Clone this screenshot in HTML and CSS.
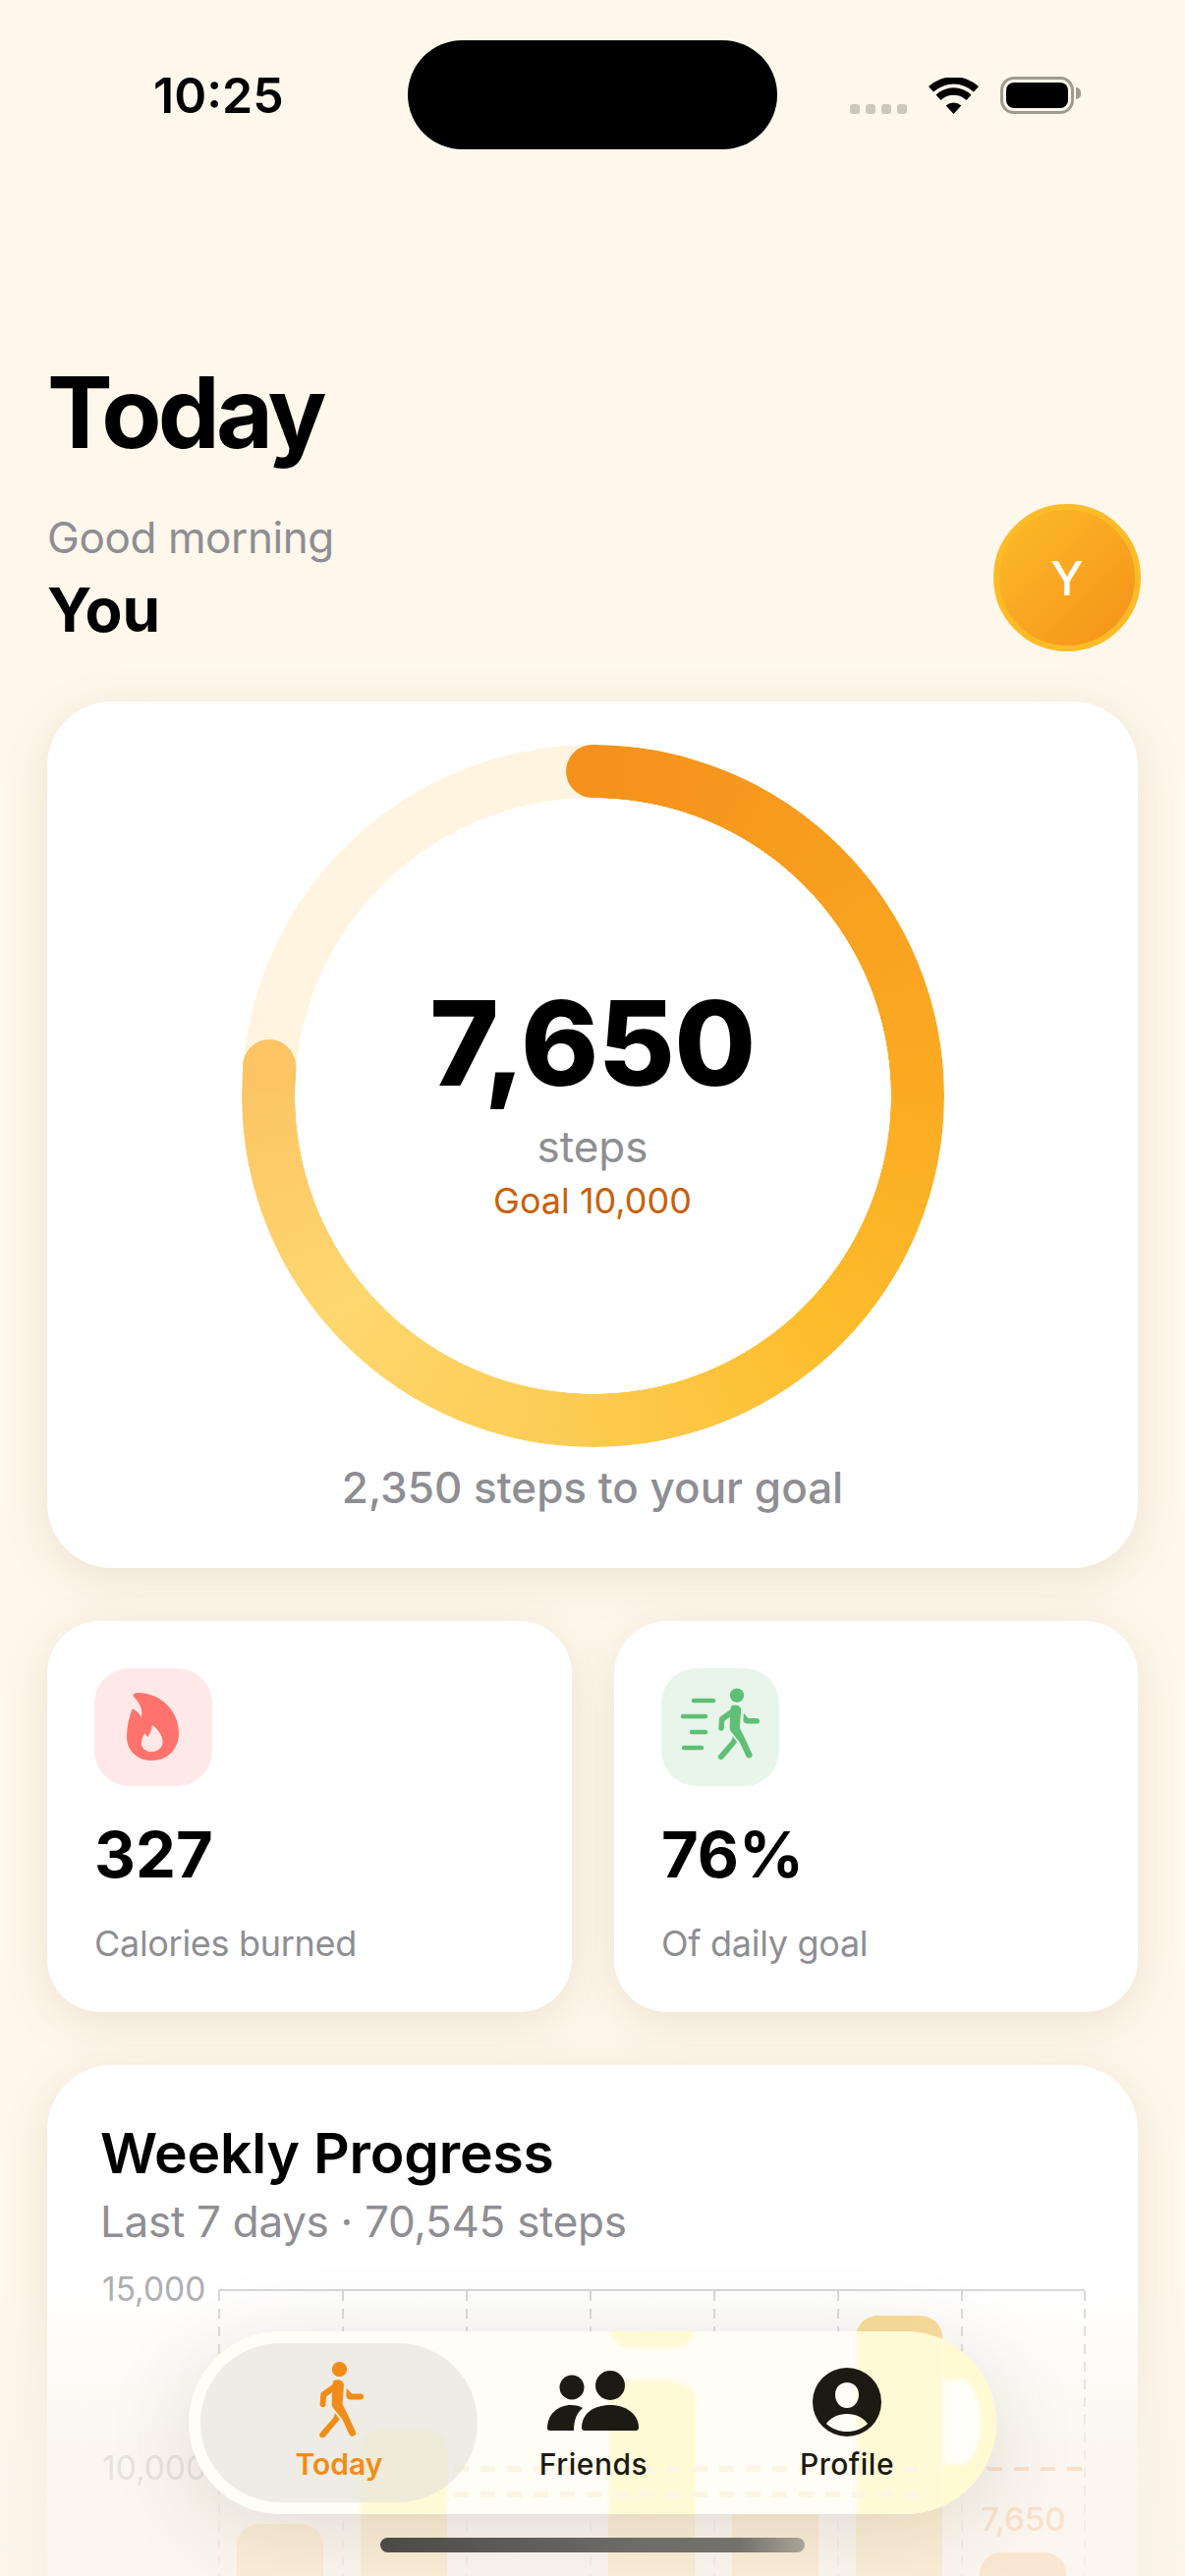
FILE: index.html
```html
<!DOCTYPE html>
<html lang="en">

<head>
    <meta charset="UTF-8">
    <meta name="viewport" content="width=device-width, initial-scale=1.0">
    <title>Today</title>
    <link rel="stylesheet" href="styles.css">
</head>

<body>
    <svg class="defs" width="0" height="0">
        <symbol id="walker" viewBox="0 0 49 78">
            <circle cx="24.5" cy="7.7" r="7.6" />
            <path d="M18 19.5C22 17 28 18 29 23L27.5 43L33 54L40.5 70.5A3.4 3.4 0 0 1 34.5 74L27.5 58.5L18.5 47.5C16.5 45 16.5 43 16.7 41L17 30Z" />
            <path d="M19 22L7 30.5C5.6 31.5 5.2 32.6 5.2 34L4.6 43A2.9 2.9 0 0 0 10.4 43.5L11 35.5L17 31Z" />
            <path d="M31.8 27L37 32.5L46 32.5A2.9 2.9 0 0 1 46 38.5L36 38.5C33.500 38.500 31.400 37 31.300 34.500Z" />
            <path d="M19.800 52L24.700 58.500L9.500 76.500C6.500 79 2.500 75.500 4.700 72.500L16.500 59C18.500 57 19.500 55 19.800 52Z" />
        </symbol>
    </svg>

    <div class="screen">
        <div class="status">
            <span class="time">10:25</span>
            <div class="island"></div>
            <div class="status-icons">
                <div class="signal"><i></i><i></i><i></i><i></i></div>
                <svg class="wifi" viewBox="0 0 51 37">
                    <path d="M25.500 37L17.700 28.500A11.500 11.500 0 0 1 33.300 28.500Z" />
                    <path d="M12.500 23L7.500 17.500A26 26 0 0 1 43.500 17.500L38.500 23A18.600 18.600 0 0 0 12.500 23Z" />
                    <path d="M5 14.500L0 9A38 38 0 0 1 51 9L46 14.500A30.500 30.500 0 0 0 5 14.500Z" />
                </svg>
                <div class="battery">
                    <div class="battery-level"></div>
                </div>
            </div>
        </div>

        <main class="content">
            <h1>Today</h1>
            <div class="greeting">
                <div>
                    <div class="greeting-sub">Good morning</div>
                    <div class="greeting-name">You</div>
                </div>
                <div class="avatar">Y</div>
            </div>

            <section class="card ring-card">
                <div class="ring">
                    <div class="ring-track"></div>
                    <div class="ring-fill"></div>
                    <div class="ring-cap ring-cap-start"></div>
                    <div class="ring-cap ring-cap-end"></div>
                    <div class="ring-value">7,650</div>
                    <div class="ring-unit">steps</div>
                    <div class="ring-goal">Goal 10,000</div>
                </div>
                <p class="ring-note">2,350 steps to your goal</p>
            </section>

            <div class="stats">
                <section class="card stat">
                    <div class="stat-icon stat-icon-red">
                        <svg viewBox="0 0 120 120" width="120" height="120">
                            <path fill-rule="evenodd" d="M40 29C38.500 26.500 41 25 44 25C68 25 86 44 86 66C86 83 74 94 58 94C43 94 33 83 33 70C33 60 35 51 38 43C38.500 41.500 40 41.500 41 42.500C44 44 46.500 47 47.500 50C50 42 46 35 40 29ZM59 58C58 63 56.500 67 54.500 70C53 68.500 52.500 67.500 51.500 66.500C49 69.500 48 73 48 76.500C48 81.500 52.500 85 58 85C64.500 85 69.500 81 69.500 75C69.500 68 64.500 62 59 58Z" />
                        </svg>
                    </div>
                    <div class="stat-value">327</div>
                    <div class="stat-label">Calories burned</div>
                </section>
                <section class="card stat">
                    <div class="stat-icon stat-icon-green">
                        <svg viewBox="0 0 120 120" width="120" height="120">
                            <g class="speed-lines">
                                <path d="M33 33H53" />
                                <path d="M22 49H45" />
                                <path d="M31 65H45" />
                                <path d="M23 81H41" />
                            </g>
                            <use href="#walker" x="54" y="20" width="46" height="74" />
                        </svg>
                    </div>
                    <div class="stat-value">76%</div>
                    <div class="stat-label">Of daily goal</div>
                </section>
            </div>

            <section class="card weekly">
                <h2>Weekly Progress</h2>
                <p class="weekly-sub">Last 7 days · 70,545 steps</p>
                <div class="chart">
                    <div class="axis">
                        <span>15,000</span>
                        <span>10,000</span>
                    </div>
                    <div class="plot">
                        <div class="goal-line"></div>
                        <div class="col"><div class="bar" style="height: 307px"></div></div>
                        <div class="col"><div class="bar" style="height: 403px"></div></div>
                        <div class="col"><div class="bar" style="height: 251px"></div></div>
                        <div class="col"><div class="bar" style="height: 453px"></div></div>
                        <div class="col"><div class="bar" style="height: 356px"></div></div>
                        <div class="col"><div class="bar" style="height: 519px"></div></div>
                        <div class="col col-last">
                            <span class="bar-label">7,650</span>
                            <div class="bar bar-today" style="height: 278px"></div>
                        </div>
                    </div>
                </div>
            </section>
        </main>

        <div class="fade"></div>

        <nav class="tabbar">
            <div class="ghost ghost-a"></div>
            <div class="ghost ghost-b"></div>
            <div class="ghost ghost-c"></div>
            <div class="ghost ghost-d"></div>
            <div class="ghost-dash ghost-dash-a"></div>
            <div class="ghost-dash ghost-dash-b"></div>
            <div class="ghost-end"></div>
            <div class="ghost-spot"></div>

            <a class="tab tab-active">
                <svg class="tab-icon" width="49" height="78"><use href="#walker" /></svg>
                <span>Today</span>
            </a>
            <a class="tab">
                <svg class="tab-icon tab-icon-friends" viewBox="0 0 94 64" width="94" height="64">
                    <circle cx="25" cy="18" r="12.500" />
                    <circle cx="64" cy="16" r="15" />
                    <path d="M0 60C0 45 11 36 24 36C29 36 33 37 36 39C30 44 27 51 27 62L3 62C1 62 0 61 0 60Z" />
                    <path d="M35 59C35 45 47 36 64 36C81 36 93 46 93 59C93 61 92 62 90 62L38 62C36 62 35 61 35 59Z" />
                </svg>
                <span>Friends</span>
            </a>
            <a class="tab">
                <svg class="tab-icon tab-icon-profile" viewBox="0 0 70 70" width="70" height="70">
                    <path fill-rule="evenodd" d="M35 0A35 35 0 1 1 35 70A35 35 0 1 1 35 0ZM35 15C28 15 23 20 23 27.500C23 35 28 41 35 41C42 41 47 35 47 27.500C47 20 42 15 35 15ZM35 47C26 47 18 51 14 57C20 62.500 27 65 35 65C43 65 50 62.500 56 57C52 51 44 47 35 47Z" />
                </svg>
                <span>Profile</span>
            </a>
        </nav>

        <div class="home-indicator"></div>
    </div>
</body>

</html>
```

FILE: styles.css
```css
* {
    box-sizing: border-box;
}

body {
    margin: 0;
    font-family: Inter, "Liberation Sans", sans-serif;
    color: #000;
    background-color: #fef7ec;
}

.defs {
    position: absolute;
}

.screen {
    position: relative;
    width: 1206px;
    height: 2622px;
    overflow: hidden;
    background-color: #fef7ec;
}

/* status bar */
.status {
    display: flex;
    align-items: center;
    padding: 41px 0 0 156px;
}

.time {
    width: 259px;
    font-size: 50px;
    font-weight: 600;
    line-height: 60px;
}

.island {
    width: 376px;
    height: 111px;
    border-radius: 56px;
    background-color: #000;
}

.status-icons {
    display: flex;
    align-items: flex-end;
    height: 38px;
    margin-left: 74px;
}

.signal {
    display: flex;
    gap: 6px;
    margin-right: 22px;
}

.signal i {
    width: 10px;
    height: 10px;
    border-radius: 3px;
    background-color: #ccc8bc;
}

.wifi {
    width: 51px;
    height: 37px;
    margin-right: 22px;
}

.battery {
    position: relative;
    width: 75px;
    height: 38px;
    padding: 3px;
    border: 3px solid #a09b90;
    border-radius: 14px;
}

.battery::after {
    content: "";
    position: absolute;
    top: 8px;
    right: -10px;
    width: 5px;
    height: 12px;
    border-radius: 0 6px 6px 0;
    background-color: #a09b90;
}

.battery-level {
    height: 100%;
    border-radius: 8px;
    background-color: #000;
}

/* page */
.content {
    padding: 0 48px;
}

h1 {
    margin: 208px 0 0;
    font-size: 100px;
    font-weight: 700;
    line-height: 120px;
    letter-spacing: -3.8px;
}

.greeting {
    display: flex;
    align-items: center;
    justify-content: space-between;
    margin: 33px -3px 51px 0;
}

.greeting-sub {
    font-size: 44px;
    line-height: 54px;
    letter-spacing: -0.4px;
    color: #8e8e93;
}

.greeting-name {
    margin-top: 11px;
    font-size: 62px;
    font-weight: 700;
    line-height: 72px;
}

.avatar {
    display: flex;
    align-items: center;
    justify-content: center;
    width: 150px;
    height: 150px;
    border: 6px solid #fdbc27;
    border-radius: 50%;
    background: linear-gradient(135deg, #fdbc29, #f59118);
    color: #fff;
    font-size: 48px;
    font-weight: 500;
}

.card {
    border-radius: 66px;
    background-color: #fff;
    box-shadow: 0 10px 48px rgba(130, 95, 40, 0.13);
}

/* ring */
.ring-card {
    height: 882px;
    padding-top: 44px;
}

.ring {
    position: relative;
    display: flex;
    flex-direction: column;
    align-items: center;
    width: 715px;
    height: 715px;
    margin: 0 auto;
    padding-top: 239px;
}

.ring-track {
    position: absolute;
    inset: 0;
    border: 54px solid #fff4df;
    border-radius: 50%;
}

.ring-fill {
    position: absolute;
    inset: 0;
    border-radius: 50%;
    background: conic-gradient(#f5911c 0deg, #fbab22 90deg, #fdbd2b 135deg, #fdcb50 180deg, #fed76f 230deg, #fcc464 275.4deg, transparent 275.4deg);
    -webkit-mask: radial-gradient(closest-side, transparent calc(100% - 54.5px), #000 calc(100% - 54px));
    mask: radial-gradient(closest-side, transparent calc(100% - 54.5px), #000 calc(100% - 54px));
}

.ring-cap {
    position: absolute;
    width: 54px;
    height: 54px;
    border-radius: 50%;
}

.ring-cap-start {
    top: 0;
    left: 330.5px;
    background-color: #f5911c;
}

.ring-cap-end {
    top: 300px;
    left: 1px;
    background-color: #fcc464;
}

.ring-value {
    position: relative;
    font-size: 120px;
    font-weight: 800;
    line-height: 130px;
    letter-spacing: -0.7px;
}

.ring-unit {
    position: relative;
    margin-top: 13px;
    font-size: 44px;
    line-height: 54px;
    color: #8e8e93;
}

.ring-goal {
    position: relative;
    margin-top: 6px;
    font-size: 36px;
    line-height: 44px;
    color: #c8600a;
}

.ring-note {
    margin: 14px 0 0;
    font-size: 44px;
    font-weight: 500;
    line-height: 54px;
    text-align: center;
    color: #8e8e93;
}

/* stat cards */
.stats {
    display: grid;
    grid-template-columns: 534px 533px;
    gap: 43px;
    margin-top: 54px;
}

.stat {
    height: 398px;
    padding: 48px;
    border-radius: 54px;
}

.stat-icon {
    width: 120px;
    height: 120px;
    border-radius: 36px;
}

.stat-icon-red {
    background-color: #ffe9e8;
    fill: #ff736c;
}

.stat-icon-green {
    background-color: #e8f5ea;
    fill: #5fbf75;
}

.speed-lines {
    fill: none;
    stroke: #5fbf75;
    stroke-width: 4.5px;
    stroke-linecap: round;
}

.stat-value {
    margin-top: 30px;
    font-size: 65px;
    font-weight: 700;
    line-height: 80px;
}

.stat-label {
    margin-top: 28px;
    font-size: 36px;
    line-height: 44px;
    letter-spacing: -0.3px;
    color: #8e8e93;
}

/* weekly chart */
.weekly {
    height: 900px;
    margin-top: 54px;
    padding: 56px 54px 0;
}

h2 {
    margin: 0;
    font-size: 57px;
    font-weight: 600;
    line-height: 68px;
    letter-spacing: -0.2px;
}

.weekly-sub {
    margin: 8px 0 0;
    font-size: 44px;
    line-height: 54px;
    letter-spacing: -0.3px;
    color: #8e8e93;
}

.chart {
    display: flex;
    margin-top: 42px;
}

.axis {
    display: flex;
    flex-direction: column;
    width: 120px;
    margin-top: -20px;
    padding-left: 2px;
    font-size: 33.5px;
    line-height: 40px;
    color: #aeaeb2;
}

.axis span {
    height: 182px;
}

.plot {
    position: relative;
    display: grid;
    grid-template-columns: repeat(7, 126px);
    width: 883px;
    height: 546px;
    border-top: 2px solid #d8d8d8;
}

.goal-line {
    position: absolute;
    top: 179px;
    left: 0;
    right: 0;
    height: 4px;
    background: repeating-linear-gradient(to right, #f3ac72 0 15px, transparent 15px 27px);
}

.col {
    display: flex;
    flex-direction: column;
    align-items: center;
    justify-content: flex-end;
    background: repeating-linear-gradient(to bottom, #d8d8d8 0 10px, transparent 10px 18px) left top / 2px 100% no-repeat;
}

.col-last {
    width: 127px;
    background:
        repeating-linear-gradient(to bottom, #d8d8d8 0 10px, transparent 10px 18px) left top / 2px 100% no-repeat,
        repeating-linear-gradient(to bottom, #d8d8d8 0 10px, transparent 10px 18px) right top / 2px 100% no-repeat;
}

.bar {
    width: 88px;
    border-radius: 22px 22px 0 0;
    background-color: #fbd98f;
}

.bar-today {
    background-color: #f9b26e;
}

.bar-label {
    margin-bottom: 14px;
    font-size: 33px;
    font-weight: 500;
    color: #f3a566;
}

/* bottom fade and tab bar */
.fade {
    position: absolute;
    left: 0;
    right: 0;
    bottom: 0;
    height: 292px;
    background: linear-gradient(to bottom, rgba(250, 244, 234, 0), rgba(250, 244, 234, 0.75) 58%, rgba(250, 244, 234, 0.8));
}

.tabbar {
    position: absolute;
    top: 2373px;
    left: 192px;
    display: grid;
    grid-template-columns: 282px 236px 280px;
    width: 822px;
    height: 186px;
    padding: 12px;
    overflow: hidden;
    border-radius: 93px;
    background-color: #fffdf5;
    box-shadow: 0 16px 90px rgba(70, 60, 40, 0.14);
}

.ghost {
    position: absolute;
    width: 88px;
    background-color: #fffad6;
    filter: blur(1.5px);
}

.ghost-a {
    top: 100px;
    left: 175px;
    bottom: 0;
    border-radius: 22px 22px 0 0;
}

.ghost-b {
    top: -10px;
    left: 428px;
    height: 27px;
    border-radius: 0 0 22px 22px;
}

.ghost-c {
    top: 50px;
    left: 428px;
    bottom: -10px;
    border-radius: 22px 22px 0 0;
}

.ghost-d {
    top: -10px;
    left: 680px;
    bottom: -10px;
}

.ghost-dash {
    position: absolute;
    left: 270px;
    right: 80px;
    height: 6px;
    background: repeating-linear-gradient(to right, #fdf5e4 0 15px, transparent 15px 27px);
}

.ghost-dash-a {
    top: 137px;
}

.ghost-dash-b {
    top: 163px;
}

.ghost-end {
    position: absolute;
    top: 0;
    left: 768px;
    right: 0;
    bottom: 0;
    background-color: #fffad2;
}

.ghost-spot {
    position: absolute;
    top: 49px;
    left: 768px;
    width: 38px;
    height: 86px;
    border-radius: 0 19px 19px 0 / 0 43px 43px 0;
    background-color: #fffef9;
    filter: blur(2px);
}

.tab {
    position: relative;
    display: flex;
    flex-direction: column;
    align-items: center;
    justify-content: flex-end;
    height: 162px;
    padding-bottom: 21px;
    font-size: 30px;
    font-weight: 500;
    line-height: 36px;
    letter-spacing: 0.5px;
    color: #1c1a12;
    fill: #1c1a12;
}

.tab-icon {
    margin-bottom: 8px;
}

.tab-icon-friends {
    margin-bottom: 14px;
}

.tab-icon-profile {
    margin-bottom: 10px;
}

.tab-active {
    border-radius: 81px;
    background-color: rgba(226, 225, 216, 0.6);
    font-weight: 600;
    letter-spacing: 0;
    color: #f28c18;
    fill: #f28c18;
}

.home-indicator {
    position: absolute;
    top: 2583px;
    left: 387px;
    width: 432px;
    height: 15px;
    border-radius: 8px;
    background: linear-gradient(to right, #4c4a47, #6e6c68 60%, #75726c 85%, #aaa598);
}
```
